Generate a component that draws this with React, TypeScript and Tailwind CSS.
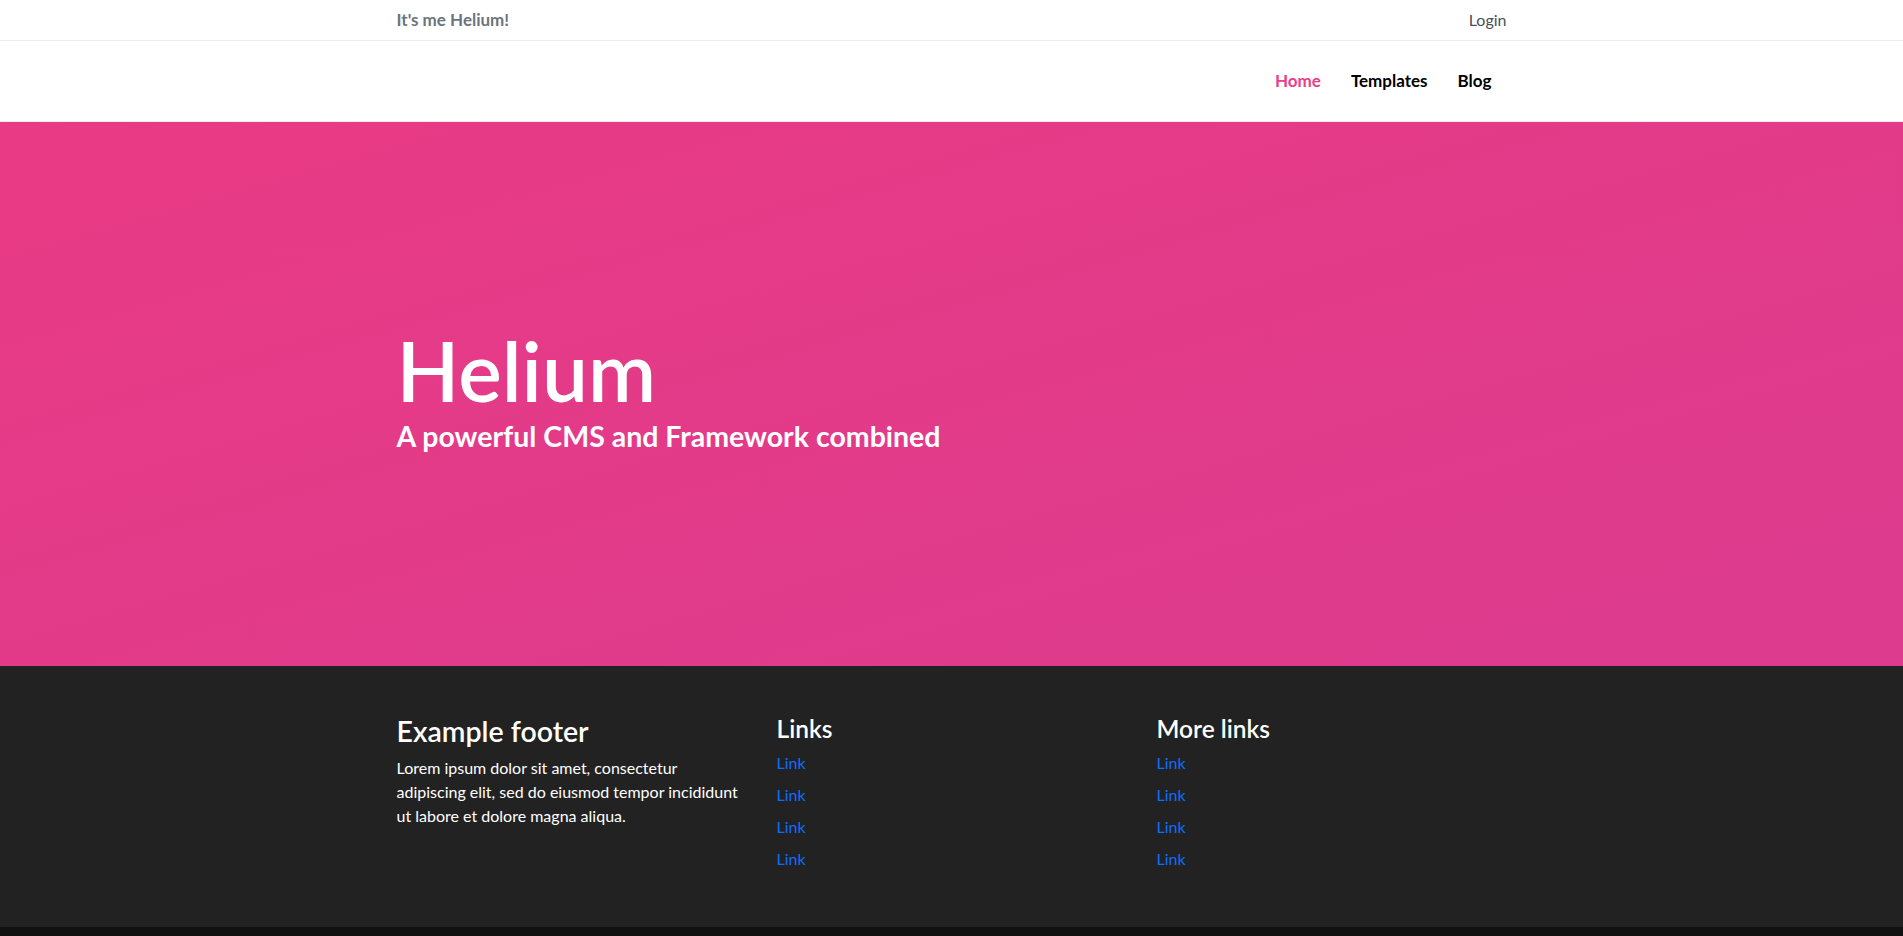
import React from "react";

const links = ["Link", "Link", "Link", "Link"];

export default function App() {
  return (
    <div className="min-h-[936px] bg-[#111111] font-['Lato',sans-serif] text-[#212529]">
      {/* Top bar */}
      <div className="h-[41px] border-b border-[#eeeeee] bg-white">
        <div className="mx-auto flex h-10 w-[1140px] items-center justify-between px-[15px]">
          <span className="text-[17px] font-bold text-[#6c757d]">It's me Helium!</span>
          <a className="text-[16px] text-[#495057]">Login</a>
        </div>
      </div>
      {/* Navbar */}
      <nav className="h-[81px] border-b border-[#eeeeee] bg-white">
        <div className="mx-auto flex h-20 w-[1140px] items-center justify-end px-[15px]">
          <ul className="flex items-center">
            <li className="px-[15px] text-[17px] font-bold text-[#e83e8c]">Home</li>
            <li className="px-[15px] text-[17px] font-bold text-black">Templates</li>
            <li className="px-[15px] text-[17px] font-bold text-black">Blog</li>
          </ul>
        </div>
      </nav>
      {/* Hero */}
      <section className="h-[544px] bg-gradient-to-br from-[#e93a84] to-[#dc3b8f]">
        <div className="mx-auto flex h-full w-[1140px] flex-col justify-center px-[15px] pb-[12px]">
          <h1 className="text-[82px] font-semibold leading-[1.17] text-white">Helium</h1>
          <p className="text-[28.5px] font-bold leading-[1.2] text-white">
            A powerful CMS and Framework combined
          </p>
        </div>
      </section>
      {/* Footer */}
      <footer className="bg-[#222222] py-12">
        <div className="mx-auto grid w-[1140px] grid-cols-3">
          <div className="px-[15px]">
            <h3 className="mb-2 text-[28.5px] font-semibold leading-[1.2] text-white">Example footer</h3>
            <p className="text-[16px] leading-6 text-white">
              Lorem ipsum dolor sit amet, consectetur adipiscing elit, sed do eiusmod tempor incididunt ut labore et dolore magna aliqua.
            </p>
          </div>
          <div className="px-[15px]">
            <h4 className="mb-2 text-[24.5px] font-semibold leading-[1.2] text-white">Links</h4>
            <ul>
              {links.map((l, i) => (
                <li key={i} className="mb-2 text-[16px] leading-6 text-[#0d6efd]">
                  {l}
                </li>
              ))}
            </ul>
          </div>
          <div className="px-[15px]">
            <h4 className="mb-2 text-[24.5px] font-semibold leading-[1.2] text-white">More links</h4>
            <ul>
              {links.map((l, i) => (
                <li key={i} className="mb-2 text-[16px] leading-6 text-[#0d6efd]">
                  {l}
                </li>
              ))}
            </ul>
          </div>
        </div>
      </footer>
    </div>
  );
}
